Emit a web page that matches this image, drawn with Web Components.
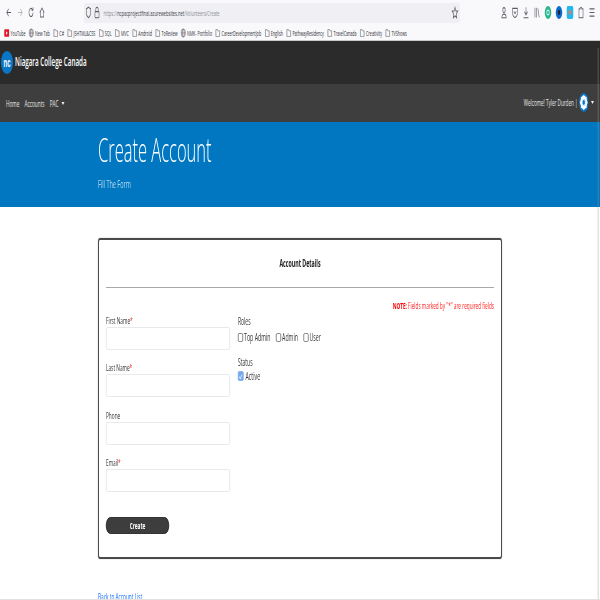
<!DOCTYPE html>
<html>
<head>
<meta charset="utf-8">
<title>Create Account</title>
<style>
	html,body{
		margin:0;
		padding:0;
		width:600px;
		height:600px;
		overflow:hidden;
		background:#fff;
		font-family:"Open Sans","Liberation Sans",sans-serif;
	}
	/* the reference is a 1200px wide page squeezed to half its width */
	#squeeze{
		display:block;
		position:relative;
		width:1200px;
		height:600px;
		overflow:hidden;
		transform:scaleX(.5);
		transform-origin:0 0;
		filter:blur(.3px);
	}
</style>
</head>
<body>
<div id="squeeze">
	<browser-chrome>
		<book-mark kind="yt">YouTube</book-mark>
		<book-mark kind="globe">New Tab</book-mark>
		<book-mark>C#</book-mark>
		<book-mark>JSHTML&amp;CSS</book-mark>
		<book-mark>SQL</book-mark>
		<book-mark>MVC</book-mark>
		<book-mark>Android</book-mark>
		<book-mark>ToReview</book-mark>
		<book-mark kind="globe">NMK- Portfolio</book-mark>
		<book-mark>CareerDevelopmentJob</book-mark>
		<book-mark>English</book-mark>
		<book-mark>PathwayResidency</book-mark>
		<book-mark>TravelCanada</book-mark>
		<book-mark>Creativity</book-mark>
		<book-mark>TVShows</book-mark>
	</browser-chrome>
	<site-header></site-header>
	<site-nav></site-nav>
	<page-banner heading="Create Account" sub="Fill The Form"></page-banner>
	<account-form></account-form>
	<page-scrollbar></page-scrollbar>
</div>

<template id="chrome-template">
	<style>
	:host{
		display:block;
		height:41px;
		box-sizing:border-box;
		background:#f9f9fb;
		border-bottom:1px solid #c8c8cc;
		color:#55555c;
	}
	.tools{
		display:flex;
		align-items:center;
		height:23px;
		padding-top:1px;
		padding-left:10px;
		padding-right:8px;
	}
	svg{
		display:block;
		width:16px;
		height:13px;
		flex:none;
		fill:none;
		stroke:#5b5b66;
		stroke-width:1.4;
	}
	.left{
		display:flex;
		gap:6px;
		width:158px;
		flex:none;
	}
	.url{
		width:752px;
		height:20px;
		flex:none;
		box-sizing:border-box;
		background:#f0f0f4;
		border-radius:4px;
		display:flex;
		align-items:center;
		padding:0 2px 0 1px;
		gap:1px;
		font-size:8px;
		color:#8a8a93;
	}
	.url b{
		font-weight:400;
		color:#3a3a42;
	}
	.url span{
		margin-left:4px;
		flex:1;
		white-space:nowrap;
	}
	.right{
		margin-left:auto;
		display:flex;
		gap:6px;
	}
	.marks{
		display:flex;
		align-items:center;
		gap:6px;
		height:17px;
		padding-left:8px;
		margin-top:0;
	}
	</style>
	<div class="tools">
		<div class="left">
			<svg viewBox="0 0 16 16"><path d="M13 8H3M7 3.500 2.500 8 7 12.500"/></svg>
			<svg viewBox="0 0 16 16" style="stroke:#b4b4ba"><path d="M3 8h10M9 3.500 13.500 8 9 12.500"/></svg>
			<svg viewBox="0 0 16 16"><path d="M13 8a5 5 0 1 1-1.600-3.700M13 1.500v3.500H9.500"/></svg>
			<svg viewBox="0 0 16 16"><path d="M2.500 8 8 2.500 13.500 8M4 7v6.500h8V7"/></svg>
		</div>
		<div class="url">
			<svg viewBox="0 0 16 16"><path d="M8 1.500 13.500 3.500V8c0 3-2.500 5-5.500 6.500C5 13 2.500 11 2.500 8V3.500Z"/></svg>
			<svg viewBox="0 0 16 16"><rect x="3" y="7" width="10" height="7.500" rx="1"/><path d="M5 7V4.500a3 3 0 0 1 6 0V7"/></svg>
			<span>https://<b>ncpacprojectfinal.azurewebsites.net</b>/Volunteers/Create</span>
			<svg viewBox="0 0 16 16"><path d="M8 1.500 10 6l4.800.500-3.600 3.200 1 4.800L8 12l-4.200 2.500 1-4.800L1.200 6.500 6 6Z"/></svg>
		</div>
		<div class="right">
			<svg viewBox="0 0 16 16"><circle cx="8" cy="5" r="3"/><path d="M2.500 14.500c0-6 11-6 11 0Z"/></svg>
			<svg viewBox="0 0 16 16"><path d="M2 3h12v5a6 6 0 0 1-12 0ZM5 6.500l3 3 3-3"/></svg>
			<svg viewBox="0 0 16 16"><path d="M8 1.500v9M4 7l4 4 4-4M2 14.500h12"/></svg>
			<svg viewBox="0 0 16 16"><path d="M3 2v12M7 2v12M10 3l3.500 11"/></svg>
			<svg viewBox="0 0 16 16" style="stroke:none"><circle cx="8" cy="8" r="8" fill="#2bb58a"/><circle cx="8" cy="8" r="3" fill="none" stroke="#dff" stroke-width="1.500"/></svg>
			<svg viewBox="0 0 16 16" style="stroke:none"><circle cx="8" cy="8" r="8" fill="#0a6ad0"/><circle cx="8" cy="8" r="3" fill="#222"/></svg>
			<svg viewBox="0 0 16 16" style="stroke:none"><rect width="16" height="16" rx="3" fill="#22b8ee"/><circle cx="8" cy="8" r="3" fill="#ee7755"/></svg>
			<svg viewBox="0 0 16 16"><path d="M6 3.500a2 2 0 0 1 4 0H13v11H3v-11Z"/></svg>
			<svg viewBox="0 0 16 16"><path d="M2 3.500h12M2 8h12M2 12.500h12"/></svg>
		</div>
	</div>
	<div class="marks"><slot></slot></div>
</template>

<template id="mark-template">
	<style>
	:host{
		display:inline-flex;
		align-items:center;
		gap:2px;
		font-size:7.300px;
		color:#2b2b33;
		white-space:nowrap;
	}
	svg{
		display:block;
		width:11px;
		height:10px;
		flex:none;
		fill:none;
		stroke:#5b5b66;
		stroke-width:1.2;
	}
	</style>
	<svg viewBox="0 0 16 16"></svg><slot></slot>
</template>

<template id="header-template">
	<style>
	:host{
		display:flex;
		align-items:center;
		height:43px;
		background:#2b2b2b;
		color:#fff;
		padding:0 2px;
		gap:4px;
	}
	.logo{
		width:24px;
		height:23px;
		border-radius:50%;
		background:#0a76c6;
		display:flex;
		align-items:center;
		justify-content:center;
		font:700 12px "Liberation Sans",sans-serif;
		flex:none;
	}
	.name{
		font-size:12.500px;
		font-weight:600;
		margin-top:-2px;
	}
	</style>
	<div class="logo">nc</div>
	<div class="name">Niagara College Canada</div>
</template>

<template id="nav-template">
	<style>
	:host{
		display:flex;
		align-items:center;
		height:38px;
		background:#3e3e3e;
		color:#e6e6e6;
		font-size:9.500px;
		padding:0 12px;
	}
	nav{
		display:flex;
		gap:10px;
		flex:1;
		align-items:center;
	}
	.caret{
		display:inline-block;
		border:3px solid transparent;
		border-top-color:#eee;
		border-bottom:0;
		margin-left:6px;
		vertical-align:2px;
	}
	.user{
		display:flex;
		align-items:center;
		gap:3px;
		margin-top:-2px;
		font-size:9.200px;
	}
	svg{
		display:block;
		width:19px;
		height:19px;
	}
	</style>
	<nav>
		<span>Home</span>
		<span>Accounts</span>
		<span>PAC<i class="caret"></i></span>
	</nav>
	<div class="user">
		<span>Welcome! Tyler Durden |</span>
		<svg viewBox="0 0 20 20">
			<circle cx="10" cy="10" r="10" fill="#0a76c6"/>
			<circle cx="10" cy="10" r="5.500" fill="none" stroke="#fff" stroke-width="3.500"/>
			<path d="M10 2v16M2 10h16M4.300 4.300l11.400 11.400M15.700 4.300 4.300 15.700" stroke="#fff" stroke-width="2"/>
			<circle cx="10" cy="10" r="2.600" fill="#0a76c6"/>
		</svg>
		<i class="caret" style="margin-left:2px"></i>
	</div>
</template>

<template id="banner-template">
	<style>
	:host{
		display:block;
		height:85px;
		box-sizing:border-box;
		background:#0077c0;
		color:#fff;
		padding:5px 0 0 196px;
	}
	h1{
		margin:0;
		font-size:33px;
		font-weight:300;
		line-height:46px;
	}
	p{
		margin:4px 0 0;
		font-size:11px;
		line-height:14px;
		color:#b9dcf2;
	}
	</style>
	<h1></h1>
	<p></p>
</template>

<template id="form-template">
	<style>
	:host{
		display:block;
		padding:31px 0 0 196px;
		font-size:9.500px;
		color:#333;
	}
	.card{
		width:808px;
		height:321px;
		box-sizing:border-box;
		border:2px solid #4a4a4a;
		border-radius:4px;
		padding:0 14px;
		background:#fff;
		box-shadow:0 0 2px rgba(0,0,0,.3);
	}
	h2{
		margin:0;
		height:47px;
		line-height:47px;
		text-align:center;
		font-size:10.500px;
		font-weight:700;
		color:#222;
		border-bottom:1px solid #aaa;
	}
	.note{
		height:25px;
		line-height:36px;
		text-align:right;
		color:#f22;
		font-size:9.400px;
	}
	.note b{
		font-weight:700;
		color:#f00;
	}
	.cols{
		display:grid;
		grid-template-columns:248px 1fr;
		gap:16px;
	}
	.group{
		font-size:10px;
		line-height:14px;
		padding-top:1px;
	}
	.checks{
		display:flex;
		gap:11px;
		margin:1px 0 9px;
		height:16px;
	}
	.checks.single{
		margin-top:-1px;
	}
	button{
		display:block;
		width:126px;
		height:17px;
		margin-top:25px;
		padding:0;
		border:1px solid #111;
		border-radius:9px;
		background:#3d3d3d;
		color:#fff;
		font:700 9.500px "Open Sans",sans-serif;
	}
	a{
		display:block;
		margin-top:31px;
		color:#0d6efd;
		text-decoration:underline;
		line-height:14px;
	}
	</style>
	<div class="card">
		<h2>Account Details</h2>
		<div class="note"><b>NOTE:</b> Fields marked by "*" are required fields</div>
		<div class="cols">
			<div>
				<form-field required>First Name</form-field>
				<form-field required>Last Name</form-field>
				<form-field>Phone</form-field>
				<form-field required>Email</form-field>
				<button type="button">Create</button>
			</div>
			<div>
				<div class="group">Roles</div>
				<div class="checks">
					<check-option>Top Admin</check-option>
					<check-option>Admin</check-option>
					<check-option>User</check-option>
				</div>
				<div class="group">Status</div>
				<div class="checks single">
					<check-option checked>Active</check-option>
				</div>
			</div>
		</div>
	</div>
	<a href="#">Back to Account List</a>
</template>

<template id="field-template">
	<style>
	:host{
		display:block;
		margin-bottom:10.300px;
		font-size:9.500px;
		color:#333;
	}
	label{
		display:block;
		height:14px;
		line-height:16px;
	}
	i{
		font-style:normal;
		color:#e22;
	}
	input{
		display:block;
		box-sizing:border-box;
		width:100%;
		height:23px;
		margin:0;
		border:1px solid #dfe2e6;
		border-radius:3px;
		background:#fff;
	}
	</style>
	<label><slot></slot><i></i></label>
	<input type="text">
</template>

<template id="check-template">
	<style>
	:host{
		display:inline-flex;
		align-items:center;
		gap:2px;
		font-size:10.500px;
		color:#333;
	}
	.box{
		width:10px;
		height:9px;
		box-sizing:border-box;
		border:1px solid #666;
		border-radius:2px;
		flex:none;
	}
	:host([checked]) .box{
		background:#76a7ef;
		border-color:#76a7ef;
		height:10px;
		width:11px;
		position:relative;
	}
	:host([checked]) .box::after{
		content:'';
		position:absolute;
		left:3px;
		top:1px;
		width:2px;
		height:5px;
		border:solid #fff;
		border-width:0 1px 1px 0;
		transform:rotate(45deg);
	}
	:host([checked]){
		gap:4px;
	}
	</style>
	<span class="box"></span><slot></slot>
</template>

<template id="scrollbar-template">
	<style>
	/* thin overlay scrollbar, lies over the page at the right and bottom edge */
	:host{
		position:absolute;
		inset:48px 0 0 0;
		pointer-events:none;
	}
	.v{
		position:absolute;
		top:0;
		bottom:0;
		right:2px;
		width:3px;
		background:rgba(150,150,150,.28);
	}
	.h{
		position:absolute;
		left:0;
		right:0;
		bottom:0;
		height:1px;
		background:#e4e0e0;
	}
	</style>
	<div class="v"></div>
	<div class="h"></div>
</template>

<script>
function shadowFrom(el, id) {
	const shadowRoot = el.attachShadow({ mode: 'open' });
	shadowRoot.appendChild(document.getElementById(id).content.cloneNode(true));
	return shadowRoot;
}

class BrowserChrome extends HTMLElement {
	constructor() {
		super();
		shadowFrom(this, 'chrome-template');
	}
}

class BookMark extends HTMLElement {
	constructor() {
		super();
		shadowFrom(this, 'mark-template');
	}
	connectedCallback() {
		const svg = this.shadowRoot.querySelector('svg');
		const kind = this.getAttribute('kind');
		if (kind === 'yt') {
			svg.innerHTML = '<rect x="0" y="2" width="16" height="12" rx="2" fill="#e0182d" stroke="none"/><path d="M6 5v6l5-3Z" fill="#fff" stroke="none"/>';
		} else if (kind === 'globe') {
			svg.innerHTML = '<circle cx="8" cy="8" r="6.500"/><ellipse cx="8" cy="8" rx="3" ry="6.500"/><path d="M1.500 8h13"/>';
		} else {
			svg.innerHTML = '<path d="M2 13.500v-11h5l1.500 2H14v9Z"/>';
		}
	}
}

class SiteHeader extends HTMLElement {
	constructor() {
		super();
		shadowFrom(this, 'header-template');
	}
}

class SiteNav extends HTMLElement {
	constructor() {
		super();
		shadowFrom(this, 'nav-template');
	}
}

class PageBanner extends HTMLElement {
	constructor() {
		super();
		shadowFrom(this, 'banner-template');
	}
	connectedCallback() {
		this.shadowRoot.querySelector('h1').textContent = this.getAttribute('heading');
		this.shadowRoot.querySelector('p').textContent = this.getAttribute('sub');
	}
}

class FormField extends HTMLElement {
	constructor() {
		super();
		shadowFrom(this, 'field-template');
	}
	connectedCallback() {
		if (this.hasAttribute('required')) {
			this.shadowRoot.querySelector('i').textContent = '*';
		}
	}
}

class CheckOption extends HTMLElement {
	constructor() {
		super();
		shadowFrom(this, 'check-template');
	}
}

class AccountForm extends HTMLElement {
	constructor() {
		super();
		shadowFrom(this, 'form-template');
	}
}

class PageScrollbar extends HTMLElement {
	constructor() {
		super();
		shadowFrom(this, 'scrollbar-template');
	}
}

customElements.define('browser-chrome', BrowserChrome);
customElements.define('book-mark', BookMark);
customElements.define('site-header', SiteHeader);
customElements.define('site-nav', SiteNav);
customElements.define('page-banner', PageBanner);
customElements.define('form-field', FormField);
customElements.define('check-option', CheckOption);
customElements.define('account-form', AccountForm);
customElements.define('page-scrollbar', PageScrollbar);
</script>
</body>
</html>
